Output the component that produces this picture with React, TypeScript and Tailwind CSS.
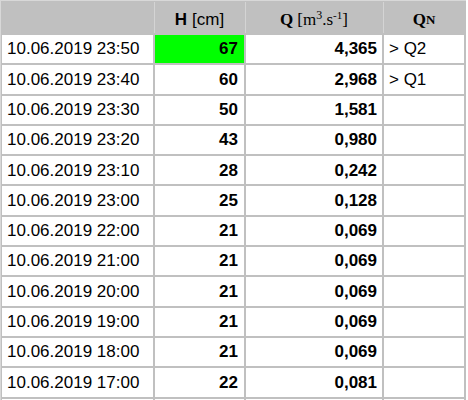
const rows = [
  { time: "10.06.2019 23:50", h: "67", q: "4,365", qn: "> Q2", hot: true },
  { time: "10.06.2019 23:40", h: "60", q: "2,968", qn: "> Q1" },
  { time: "10.06.2019 23:30", h: "50", q: "1,581", qn: "" },
  { time: "10.06.2019 23:20", h: "43", q: "0,980", qn: "" },
  { time: "10.06.2019 23:10", h: "28", q: "0,242", qn: "" },
  { time: "10.06.2019 23:00", h: "25", q: "0,128", qn: "" },
  { time: "10.06.2019 22:00", h: "21", q: "0,069", qn: "" },
  { time: "10.06.2019 21:00", h: "21", q: "0,069", qn: "" },
  { time: "10.06.2019 20:00", h: "21", q: "0,069", qn: "" },
  { time: "10.06.2019 19:00", h: "21", q: "0,069", qn: "" },
  { time: "10.06.2019 18:00", h: "21", q: "0,069", qn: "" },
  { time: "10.06.2019 17:00", h: "22", q: "0,081", qn: "" },
];

export default function App() {
  return (
    <div className="h-[400px] w-[468px] overflow-hidden bg-white font-['Liberation_Sans',Arial,sans-serif] text-[17px] text-black">
      <div className="grid w-[466px] grid-cols-[151px_89px_136px_80px] gap-[2px] border-l border-t border-[#d8d8d8] bg-[#c0c0c0] pb-[2px] pl-[1px] pr-[2px] pt-[1px]">
        {/* Header */}
        <div className="h-[31px] bg-[#c0c0c0]" />
        <div className="flex h-[31px] items-center justify-center bg-[#c0c0c0] pt-[4px] shadow-[-1px_0_0_#d4d4d4]">
          <b>H</b>
          <span className="ml-[5px]">[cm]</span>
        </div>
        <div className="flex h-[31px] items-center justify-center bg-[#c0c0c0] pt-[4px] font-['Liberation_Serif',serif] text-[17px] shadow-[-1px_0_0_#d4d4d4]">
          <b>Q</b>
          <span className="ml-[4px]">
            [m<sup className="text-[12px]">3</sup>.s<sup className="text-[11px]">-1</sup>]
          </span>
        </div>
        <div className="flex h-[31px] items-center justify-center bg-[#c0c0c0] pt-[4px] font-['Liberation_Serif',serif] font-bold shadow-[-1px_0_0_#d4d4d4]">
          <span className="text-[17px]">Q</span>
          <span className="text-[13px]">N</span>
        </div>

        {/* Data rows */}
        {rows.map((r) => (
          <div key={r.time} className="contents">
            <div className="flex h-[28.3px] items-center bg-white pl-[5px]">{r.time}</div>
            <div
              className={`flex h-[28.3px] items-center justify-end pr-[6px] font-bold ${
                r.hot ? "bg-[#00ff00]" : "bg-white"
              }`}
            >
              {r.h}
            </div>
            <div className="flex h-[28.3px] items-center justify-end bg-white pr-[5px] font-bold">{r.q}</div>
            <div className="flex h-[28.3px] items-center bg-white pl-[5px]">{r.qn}</div>
          </div>
        ))}

        {/* next row, cut off by the window */}
        <div className="h-[28.3px] bg-white" />
        <div className="h-[28.3px] bg-white" />
        <div className="h-[28.3px] bg-white" />
        <div className="h-[28.3px] bg-white" />
      </div>
    </div>
  );
}
